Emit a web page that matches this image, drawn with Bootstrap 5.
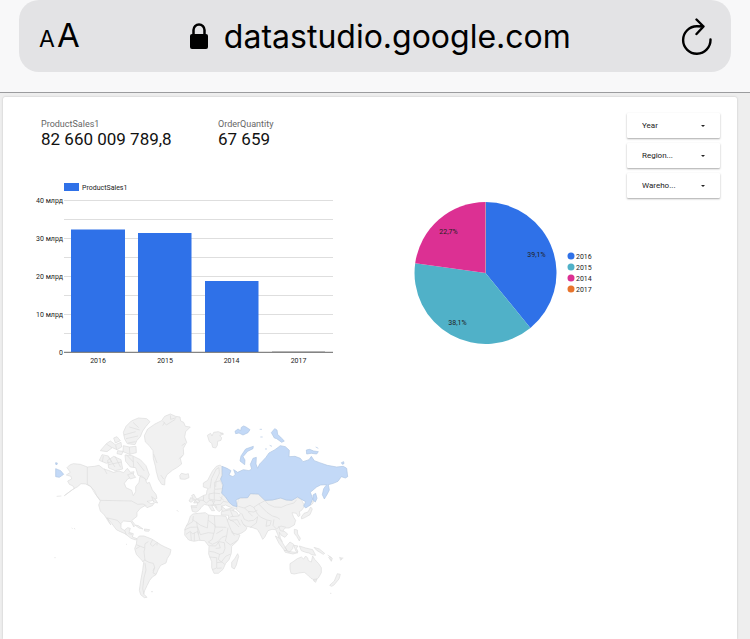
<!DOCTYPE html>
<html lang="ru">
<head>
<meta charset="utf-8">
<meta name="viewport" content="width=device-width, initial-scale=1">
<title>datastudio.google.com</title>
<link href="https://cdn.jsdelivr.net/npm/bootstrap@5.3.0/dist/css/bootstrap.min.css" rel="stylesheet">
<style>
body { font-family: Roboto, sans-serif; background: #eee; color: #111; }
.browser-bar { background: #f8f8f9; border-bottom: 1px solid #9b9c9e; padding: 0 19px 20px; }
.address { background: #e3e3e5; border-radius: 20px; height: 72px; padding: 2px 18px 0 20px; font-family: Inter, sans-serif; color: #000; }
.address button { color: #000; line-height: 44px; }
.host { font-size: 32px; }
.letters { gap: 2px; }
.size-small { font-size: 23px; }
.size-large { font-size: 33px; }
.sheet { background: #fff; margin: 4px 13px 0 3px; padding-right: 17px; box-shadow: 0 0 2px #bbb; border-radius: 2px 2px 0 0; }
.report { display: grid; grid-template-columns: minmax(0, 350fr) minmax(0, 274fr) 93px; }
.report svg { width: 100%; height: auto; display: block; }
.scores { padding: 21px 0 21px 38px; display: grid; grid-template-columns: 177px 1fr; }
.score-name { font-size: 9px; line-height: 12px; color: #666; }
.score-value { font-size: 17px; line-height: 19px; }
.filters { padding-top: 16px; gap: 5px; }
.filters select { height: 25px; padding: 0 28px 0 15px; border: 0; border-radius: 1px; font-size: 8px; color: #222; appearance: none; box-shadow: 0 1px 2px #aaa;
  background: #fff url("data:image/svg+xml,%3Csvg xmlns='http://www.w3.org/2000/svg' viewBox='0 0 4 2'%3E%3Cpath d='M0 0h4L2 2z' fill='%23222'/%3E%3C/svg%3E") no-repeat right 15px center / 4px 2px; }
.chart-text { font-size: 7px; fill: #222; }
.land { fill: #f1f1f1; stroke: #dcdcdc; stroke-width: 2; stroke-linejoin: round; }
.borders { fill: none; stroke: #dcdcdc; stroke-width: 2; stroke-linejoin: round; }
.active-land { fill: #c3d9f7; stroke: #afc5e3; stroke-width: 2; stroke-linejoin: round; }
</style>
<script src="https://cdn.jsdelivr.net/npm/bootstrap@5.3.0/dist/js/bootstrap.bundle.min.js"></script>
</head>
<body class="d-flex flex-column min-vh-100">
<header class="browser-bar">
  <div class="address d-flex align-items-center justify-content-between">
    <button type="button" class="btn p-0 border-0 d-flex align-items-baseline letters" aria-label="Text size"><span class="size-small">A</span><span class="size-large">A</span></button>
    <button type="button" class="btn p-0 border-0 d-flex align-items-center gap-3 host">
      <svg width="18" height="28" viewBox="0 0 18 28" aria-hidden="true"><rect y="11" width="18" height="15" rx="2" fill="#000"/><path d="M3.500 12V7a5.500 5.500 0 0 1 11 0V12" fill="none" stroke="#000" stroke-width="2.500"/></svg>
      <span>datastudio.google.com</span>
    </button>
    <button type="button" class="btn p-0 border-0 d-flex" aria-label="Reload">
      <svg width="32" height="38" viewBox="0 0 32 38" fill="none" stroke="#000" stroke-width="2.400" stroke-linecap="round" stroke-linejoin="round"><path d="M29.500 21.500A13.700 13.700 0 1 1 16 8.300l6.500.2M15.500 1.500l7 7-7 7.500"/></svg>
    </button>
  </div>
</header>
<main class="sheet flex-grow-1">
  <div class="report">
    <section>
      <div class="scores">
        <div><div class="score-name">ProductSales1</div><div class="score-value">82 660 009 789,8</div></div>
        <div><div class="score-name">OrderQuantity</div><div class="score-value">67 659</div></div>
      </div>
      <svg viewBox="3 170 350 210" role="img" aria-label="ProductSales1">
        <path d="M64 200.500h269M64 219.500h269M64 238.500h269M64 257.500h269M64 276.500h269M64 295.500h269M64 314.500h269M64 333.500h269" stroke="#dedede"/>
        <g fill="#2f71e8"><rect x="64" y="183" width="15" height="8"/><rect x="71" y="229.500" width="54" height="122.500"/><rect x="138" y="233" width="53.500" height="119"/><rect x="205" y="281" width="53.500" height="71"/></g>
        <path d="M64 352.300h269" stroke="#666"/>
        <path d="M272 351.500h53" stroke="#888" stroke-width=".5"/>
        <g class="chart-text">
          <text x="82" y="190">ProductSales1</text>
          <g text-anchor="end"><text x="63" y="203">40 млрд</text><text x="63" y="241">30 млрд</text><text x="63" y="279">20 млрд</text><text x="63" y="317">10 млрд</text><text x="63" y="355">0</text></g>
          <g text-anchor="middle"><text x="98" y="363">2016</text><text x="165" y="363">2015</text><text x="231.500" y="363">2014</text><text x="298.500" y="363">2017</text></g>
        </g>
      </svg>
    </section>
    <section>
      <svg viewBox="353 97 274 283" role="img" aria-label="Sales share by year">
        <path d="M485.500 273V202A71 71 0 0 1 530.400 328Z" fill="#2f71e8"/>
        <path d="M485.500 273L530.400 328A71 71 0 0 1 415.200 263.200Z" fill="#50b1c8"/>
        <path d="M485.500 273L415.200 263.200A71 71 0 0 1 485.500 202Z" fill="#dc3093"/>
        <path d="M485.500 202V273" stroke="#d28f9c" stroke-width=".7"/>
        <circle cx="571" cy="256" r="3.500" fill="#2f71e8"/><circle cx="571" cy="267" r="3.500" fill="#50b1c8"/><circle cx="571" cy="278" r="3.500" fill="#dc3093"/><circle cx="571" cy="289" r="3.500" fill="#e8742c"/>
        <g class="chart-text"><text x="576" y="259">2016</text><text x="576" y="270">2015</text><text x="576" y="281">2014</text><text x="576" y="292">2017</text>
        <g text-anchor="middle"><text x="448.500" y="234">22,7%</text><text x="536.500" y="257">39,1%</text><text x="457.500" y="325">38,1%</text></g></g>
      </svg>
    </section>
    <form class="filters d-flex flex-column">
      <select aria-label="Year"><option>Year</option></select>
      <select aria-label="Region"><option>Region...</option></select>
      <select aria-label="Warehouse"><option>Wareho...</option></select>
    </form>
    <section>
      <svg viewBox="3 380 350 225" role="img" aria-label="World map, Russia highlighted">
        <g transform="translate(45 405) scale(.33333)">
          <!-- North America -->
          <path class="land" d="M66 188L74 180 85 176 106 178 127 186 148 184 162 181 176 192 190 196 205 202 222 198 236 203 247 190 256 202 267 200 263 215 248 222 238 235 243 248 260 256 265 272 272 260 272 245 282 232 285 214 300 220 306 235 313 232 322 255 333 268 336 280 318 288 306 289 318 296 328 294 322 302 306 308 300 302 286 310 276 322 276 334 260 347 268 356 267 366 258 350 236 348 228 355 228 370 238 376 248 368 256 370 252 382 265 386 262 396 276 401 272 405 258 400 240 386 226 380 214 374 200 355 186 338 198 360 193 354 178 330 166 318 161 300 166 288 155 272 148 256 134 243 122 237 108 236 98 245 82 254 58 272 88 250 84 243 73 238 68 228 80 222 78 214 64 210 76 202Z"/>
          <path class="land" d="M270 360l10 2 14 10-12-3zM298 372l16 2-3 5-12-1zM320 275l11 8 7 11-12-3zM235 82L243 64 259 48 280 39 305 41 315 50 303 64 293 78 286 95 276 106 270 119 247 116 239 102zM166 137L184 116 196 108 211 119 228 112 230 126 216 134 202 128 186 140zM163 166l8-17 19 4 10 17-16 5zM188 166l18-12 22 10 5 28-22 5-20-8zM235 122l18 4 20-2 1 19-20 5-20-8zM240 150l22 2 24 12 17 18 10 27-8 17-12-12-14-3-7-23-16-2-14-17zM206 99l10-4 10 12-15 7zM218 137l16 2-4 10-14-3zM248 209l14-4 10 12-16 5z"/>
          <path class="borders" d="M127 186L127 238 138 245 150 266 166 286 260 288 278 298 294 297 304 302M187 339l14 3 16 4 11 12M239 376l5 14M250 386l11 2M177 190l9 17M236 90l36-10M243 101l36-8M249 114l23-4M253 66l31 9M264 52l17 16M191 157l19 29M210 154l17 33M191 179l38-8M175 153l-3 18M253 126l2 24M264 153l2 34M244 149l21 22M184 117l17 11M212 120l3 15M276 170l22 28"/>
          <!-- Greenland and North Atlantic -->
          <path class="land" d="M298 92L308 72 330 57 350 47 359 34 376 27 392 34 405 36 407 48 416 52 421 64 436 66 422 80 419 96 425 112 415 130 416 148 406 161 410 177 397 187 382 196 366 209 360 222 359 240 350 238 340 222 334 200 331 183 325 161 324 137 312 121 301 111zM404 212l5-7 14 3 7-2 2 12-12 5-14-1zM487 91l10-6 4 8 5-11 14-2 16 7-12 5 6 6-2 8-10 3-1 12-5 8-9-2-3-12-7-5zM526 86l8-2"/>
          <path class="borders" d="M376 31l1 12 17-5M359 52l-6 10M326 147l10 27M420 115l-10 7M413 151l-12 11M347 210l9 12M354 49l10 11 27-17"/>
          <!-- South America -->
          <path class="land" d="M276 401L283 393 297 393 320 402 336 412 348 420 360 426 378 434 375 448 367 460 363 474 347 481 340 493 333 509 322 516 314 526 306 542 299 557 296 567 306 577 298 578 287 569 283 556 287 528 293 496 296 472 285 460 274 448 269 431 274 417z"/>
          <path class="borders" d="M274 419l10 4 15 6 1-13 10-6M285 424l-13 8M300 429l-3 11 3 25-8 5M299 465l13 7 13 3 4 12-5 10M329 487l-5 17 9 4M300 474l3 21-6 23-4 33 4 16M323 404l-7 13 7 7 10-9M336 412v9"/>
          <!-- Europe -->
          <path class="land" d="M490 251L475 246 475 234 488 226 494 214 503 197 514 184 526 180 532 187 530 213 526 227 533 242 531 264 542 277 556 286 564 298 578 303 582 315 566 310 552 305 542 300 530 304 542 313 559 310 568 315 561 321 547 318 536 321 529 314 522 320 514 312 508 302 500 301 509 317 500 317 490 301 478 298 469 307 462 316 453 322 442 319 438 302 456 302 458 293 449 286 459 281 476 271 484 269 486 256zM440 271l7-3 5 10 12 10-2 5-16 1 5-9-7-3zM438 277l-6 11 6 4 8-6z"/>
          <path class="borders" d="M495 250l5-30 14-28 8-4 1 17-10 22-1 19M526 227l-18 5 1 21 24-2M525 266l-18-2-15 3v15l15 3 20 2 5-15M459 285l15 1 10 8 10-8 15 3-6 11-14 1M476 272l-1 16M502 287l5 13 20-2 8-9 15 3M511 299l5 11M530 302v14M508 254v31M438 306l18 1M524 276l12 9"/>
          <!-- Asia -->
          <path class="land" d="M575 310L580 280 608 278 616 266 640 267 658 286 682 285 707 279 724 285 740 286 753 277 768 282 779 303 770 316 763 320 765 331 760 335 754 325 741 323 746 337 752 346 748 360 732 369 721 369 714 376 728 387 720 397 709 391 703 382 706 399 712 410 704 407 699 390 692 374 681 373 669 377 659 397 653 403 645 386 637 373 623 368 602 363 595 358 606 368 602 376 590 384 564 393 559 379 544 351 550 340 551 331 529 330 529 320 555 314 575 321 582 333 586 324 574 314z"/>
          <path class="borders" d="M580 304l17 5 18-8 11 6 15-10 19-10 14-3M660 287l10 11 18 8 21 1 16-7 22-6 8-10M641 297l12 12 13 13 16 11 14 4 9 6M626 306l12 22 10 9 18 8 14 3M599 309l10 10 17 2 11-5M590 325l8 18 12 5 16-2 12-11M582 333l-25 2-7 7 18 9 14 15M556 316l8 19M638 335l-4 19-18 13M666 346l-3 18 12-3 3-12M687 343l-3 18 10 11 14-9 15 4M701 363l5 14 10 2M555 346l22-2 9 17M588 344l7 14M610 321l13 13"/>
          <path class="land" d="M769 336l8-11 12-4 8-15 5 6-7 17-14 8-11 5zM796 301l-3-12 14-1-5 9zM748 373l9 2 1 12 8 13-3 8-8-14-7-9zM691 393l13 7 14 22 8 14-7 1-17-22zM720 428l15-17 11 7-3 13-11 12zM747 421l12 2-5 7 5 10-6-1-5-13zM717 436l19 4 23 3-15 4-23-5zM763 423l19 6 21 5 9 17-12-2-8-5-10-2-13-5zM807 427l16 5 16 13-4 3-20-12zM854 454l8 6-3 9-8-12zM884 457l8 4-5 5z"/>
          <!-- Africa -->
          <path class="land" d="M443 327L461 325 481 323 491 330 508 332 526 332 543 334 550 355 562 384 585 390 578 407 560 424 559 445 552 464 542 475 534 493 520 505 507 505 500 488 500 470 491 447 492 424 479 407 461 406 447 409 431 405 419 390 420 371 430 352 436 334zM560 472l9-11 9-15 3 8-7 26-6 12-8-5z"/>
          <path class="borders" d="M445 333l-2 17-20 13M443 344l24 17 20 8 4-39M508 332l2 34 34 1M490 346l21 16-4 23-17-2-24 6-8-23-22 1-18 8M423 388l13-9 7 8 15-8 7 27M437 381l2 25M448 383v25M506 385l-4 18-12 8 12 7 17-8 12-13 14-5 4-24M545 393l-4 15 15 12 21-14M493 422l19 1 10-13 16 3 2 17-5 14-11 4-17-7-14-2M524 447l-4 16 9 8 13-17 15-7M493 456l22 2v31l-13 5M516 473l15-2 8 7M516 490l14-1M520 410l6 19-14 1M561 378l7 14M514 386l20-12M455 350l5 38"/>
          <!-- Oceania -->
          <path class="land" d="M735 476L746 469 757 461 769 456 776 462 782 453 788 459 790 467 799 471 803 453 809 463 821 476 829 488 829 503 820 519 810 526 798 520 788 510 778 502 762 504 748 507 738 505 735 492zM806 523l10-1-4 10-6-4zM877 506l9 2-4 14-15 18-7 4-6-3 14-13zM848 450l12 9M855 460l5 7M889 459h6M80 369l3 2M88 369l2 4M35 274l14-1M395 315l5 5M318 560h6M28 458h4M243 418h3M855 565h4"/>
          <!-- Russia -->
          <path class="active-land" d="M531 184L546 190 558 197 552 210 564 215 571 208 566 194 578 202 595 194 612 197 620 192 616 178 624 160 634 157 633 177 638 190 644 177 650 171 662 158 672 144 690 134 706 122 721 125 733 136 732 155 750 154 766 160 774 170 792 164 799 154 808 167 824 173 847 181 875 186 895 184 905 190 908 215 901 219 889 215 879 229 865 235 850 239 853 255 847 267 838 282 832 269 836 251 845 239 827 240 815 246 796 262 799 270 803 282 795 301 782 309 776 303 782 290 771 284 758 276 741 286 724 285 707 279 682 285 660 286 640 267 616 266 608 278 587 278 573 285 576 305 564 302 553 293 541 275 530 265 534 240 527 222 532 211zM32 191l15 6 9 11-13 9-11-2zM32 173l5 1-1 5-4-1zM570 79l9-7 8 5 2-10 7-4 7 3 12 8-6 9-15 7-12-6-10 2zM625 124l-23 8-14 21-3 15 14 11 1-14-6-10 14-16 16-8zM679 83l10-12 7 4 2 13 12 12 8 8-8 4-15-11-7-2zM784 135l10-2 12 5 14 2-5 7-16-2-14 2zM889 173l7-3 1 6-5 2zM804 270l8-5 4 15-5 11-7-6zM812 126l8 4M646 96h7M644 73h7M660 132h6M674 121l7 3"/>
        </g>
      </svg>
    </section>
  </div>
</main>
</body>
</html>
